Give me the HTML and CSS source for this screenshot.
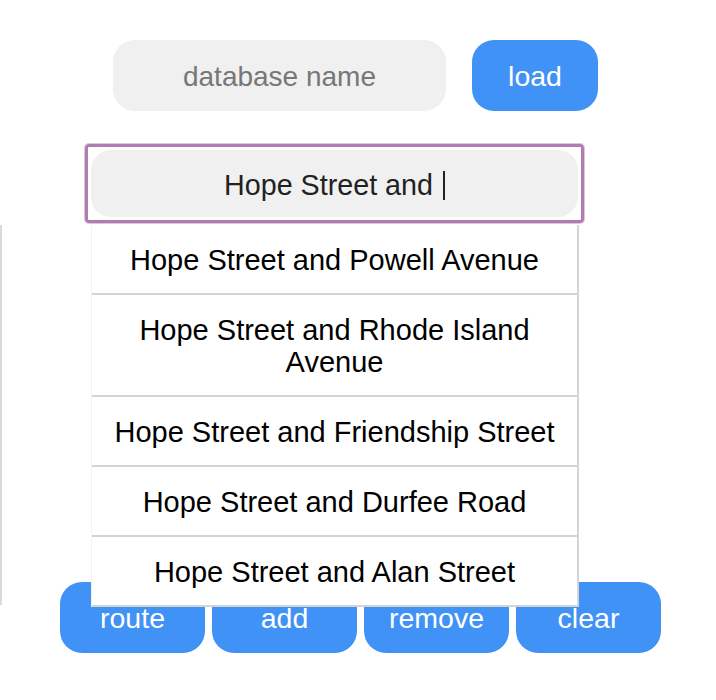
FILE: index.html
```html
<!DOCTYPE html>
<html>
<head>
<meta charset="utf-8">
<link rel="stylesheet" href="styles.css">
</head>
<body>
<div class="db-row">
  <input class="db-input" type="text" placeholder="database name">
  <button class="btn load">load</button>
</div>
<div class="search-wrap">
  <div class="focus-ring">
    <div class="search-box">Hope Street and <span class="caret"></span></div>
  </div>
  <ul class="dropdown">
    <li>Hope Street and Powell Avenue</li>
    <li>Hope Street and Rhode Island Avenue</li>
    <li>Hope Street and Friendship Street</li>
    <li>Hope Street and Durfee Road</li>
    <li>Hope Street and Alan Street</li>
  </ul>
</div>
<div class="stops"></div>
<div class="actions">
  <button class="btn">route</button>
  <button class="btn">add</button>
  <button class="btn">remove</button>
  <button class="btn">clear</button>
</div>
</body>
</html>
```
FILE: styles.css
```css
html, body {
  margin: 0;
  padding: 0;
  background: #ffffff;
  font-family: "Liberation Sans", Arial, sans-serif;
  font-size: 28px;
}

.db-row {
  display: flex;
  gap: 26px;
  padding: 40px 0 0 113px;
}

.db-input {
  width: 333px;
  height: 71px;
  box-sizing: border-box;
  border: none;
  border-radius: 22px;
  background: #f0f0f0;
  font-family: inherit;
  font-size: 28px;
  text-align: center;
  color: #222;
  outline: none;
  padding: 2px 0 0 0;
}

.db-input::placeholder {
  color: #777777;
}

.btn {
  border: none;
  border-radius: 22px;
  background: #4192f6;
  color: #ffffff;
  font-family: inherit;
  font-size: 28.5px;
  height: 71px;
  padding: 2px 0 0 0;
  cursor: pointer;
}

.load {
  width: 126px;
}

.search-wrap {
  position: relative;
  margin: 33px 0 0 85px;
  width: 500px;
}

.focus-ring {
  border: 3px solid #b07db1;
  border-radius: 4px;
  padding: 3px;
  width: 487px;
  box-shadow: 0 0 0 1px #dcc6dd;
}

.search-box {
  height: 67px;
  border-radius: 20px;
  background: #f0f0f0;
  color: #222222;
  font-size: 28.7px;
  display: flex;
  align-items: center;
  justify-content: center;
  white-space: pre;
  padding-top: 3px;
  box-sizing: border-box;
}

.caret {
  display: inline-block;
  width: 2px;
  height: 29px;
  background: #222222;
  margin-left: 2px;
}

.dropdown {
  position: absolute;
  left: 6px;
  top: 81px;
  width: 488px;
  box-sizing: border-box;
  margin: 0;
  padding: 0;
  list-style: none;
  background: #ffffff;
  border-right: 2px solid #d4d4d4;
  border-left: 1px solid #f2f2f2;
  z-index: 2;
  font-size: 29px;
}

.dropdown li {
  padding: 19px 10px 17px;
  line-height: 32px;
  text-align: center;
  color: #000000;
  border-bottom: 2px solid #d4d4d4;
}

.stops {
  height: 357px;
  margin-top: 2px;
  position: relative;
}

.stops::before {
  content: "";
  position: absolute;
  left: 0;
  top: 0;
  width: 2px;
  height: 380px;
  background: #dadada;
}

.actions {
  display: flex;
  gap: 7px;
  padding-left: 60px;
}

.actions .btn {
  width: 145px;
}
```
